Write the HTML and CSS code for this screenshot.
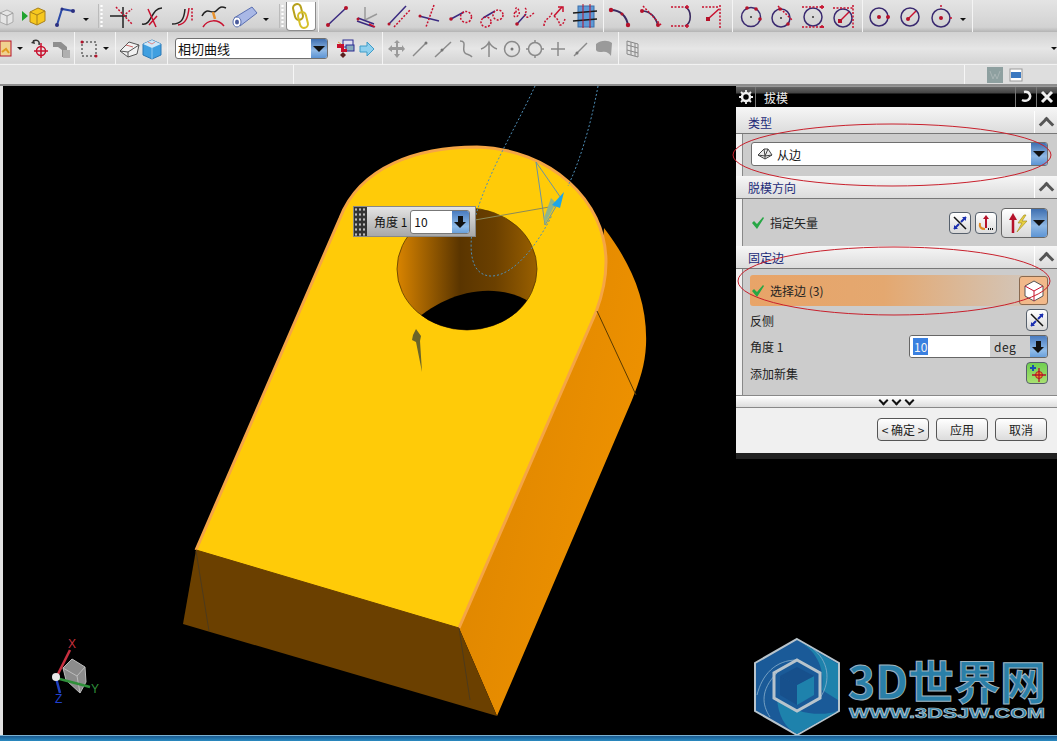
FILE: index.html
```html
<!DOCTYPE html>
<html lang="en">
<head>
  <meta charset="UTF-8">
  <title>拔模</title>
  <link rel="stylesheet" href="styles.css">
</head>
<body>
<div class="app">
  <!-- Top toolbar -->
  <div class="toolbar row-one">
    <div class="tb-group group-file">
      <span class="tool tool-cut"><svg width="16" height="24" viewBox="10 0 16 24"><path d="M10 9l7-3 6 3v9l-6 3-7-3z" fill="#e6e6e6" stroke="#aaa"/><path d="M10 9l7 3 6-3M17 12v9" fill="none" stroke="#999"/></svg></span>
      <span class="tool"><svg width="26" height="24" viewBox="0 0 26 24"><path d="M1 7l6 5-6 5z" fill="#1fa32e"/><path d="M9 8l8-4 7 3v10l-8 4-7-3z" fill="#f7c81e" stroke="#a8801a"/><path d="M9 8l7 3 8-4M16 11v10" fill="none" stroke="#a8801a"/></svg></span>
      <span class="tool"><svg width="24" height="24" viewBox="0 0 24 24"><path d="M4 21L9 5l11 2" class="ln-blue"/><circle cx="4" cy="21" r="2" class="dot-navy"/><circle cx="9" cy="5" r="1.5" class="dot-navy"/><circle cx="20" cy="7" r="2" class="dot-navy"/></svg></span>
      <span class="drop"></span>
    </div>
    <div class="tb-group group-curves">
      <span class="grip"></span>
      <span class="tool"><svg width="24" height="24" viewBox="0 0 24 24"><path d="M1 12h17M14 3v21" class="ln-black"/><path d="M7 3l16 17M14 12L23 5" class="ln-red dash"/></svg></span>
      <span class="tool"><svg width="24" height="24" viewBox="0 0 24 24"><path d="M2 20c10 2 9-16 20-16" class="ln-black"/><path d="M8 5l8 18M17 12L9 21" class="ln-red"/></svg></span>
      <span class="tool"><svg width="24" height="24" viewBox="0 0 24 24"><path d="M1 20c9 0 12-4 13-15" class="ln-black"/><path d="M7 21c8-1 10-8 11-17" class="ln-red"/><path d="M21 4v14" class="ln-red dash"/></svg></span>
      <span class="tool"><svg width="26" height="24" viewBox="0 0 26 24"><path d="M1 12c5-10 10-1 14-5s5-5 10-3" class="ln-black"/><path d="M2 23c5-8 15-8 21-1" class="ln-red"/><path d="M12 8l2 7" class="ln-orange"/></svg></span>
      <span class="tool"><svg width="28" height="24" viewBox="0 0 28 24"><path d="M3 14L21 3l5 6L9 22z" fill="#a9b8e6" stroke="#5a6fb0"/><ellipse cx="6" cy="18" rx="4" ry="5" fill="#fff" stroke="#5a6fb0"/><ellipse cx="6" cy="18" rx="2" ry="2.500" fill="#4a5a9a"/></svg></span>
      <span class="drop"></span>
    </div>
    <div class="tb-group group-chain">
      <span class="grip"></span>
      <span class="chain-btn"><svg width="18" height="28" viewBox="0 0 18 28"><rect x="2" y="2" width="8" height="16" rx="4" transform="rotate(-14 6 10)" fill="none" stroke="#b7a11c" stroke-width="2"/><rect x="7" y="10" width="8" height="16" rx="4" transform="rotate(-14 11 18)" fill="none" stroke="#d6c02a" stroke-width="2"/></svg></span>
    </div>
    <div class="tb-group group-lines">
      <span class="tool"><svg width="24" height="24" viewBox="0 0 24 24"><path d="M3 21L21 4" class="ln-navy"/><circle cx="3" cy="21" r="2" class="dot-red"/><circle cx="21" cy="4" r="2" class="dot-red"/></svg></span>
      <span class="tool"><svg width="24" height="24" viewBox="0 0 24 24"><path d="M9 16V3M9 16l12-6" stroke="#9a9a9a" stroke-width="1.500" fill="none"/><path d="M1 17l17 6M2 14l16 6" class="ln-navy"/><circle cx="2" cy="15" r="1.500" class="dot-red"/><path d="M13 20l6 3" class="ln-red"/></svg></span>
      <span class="tool"><svg width="24" height="24" viewBox="0 0 24 24"><path d="M2 20L19 2" class="ln-navy"/><path d="M7 23L23 6" class="ln-red dash"/><circle cx="2" cy="20" r="1.500" class="dot-red"/></svg></span>
      <span class="tool"><svg width="24" height="24" viewBox="0 0 24 24"><path d="M1 12l20 5" class="ln-navy"/><path d="M16 1L8 23" class="ln-red dash"/><circle cx="2" cy="12" r="1.500" class="dot-red"/></svg></span>
      <span class="tool"><svg width="24" height="24" viewBox="0 0 24 24"><path d="M2 15L15 8" class="ln-navy"/><circle cx="17" cy="13" r="5.500" class="ln-red dash"/><circle cx="2" cy="15" r="1.800" class="dot-red"/></svg></span>
      <span class="tool"><svg width="24" height="24" viewBox="0 0 24 24"><path d="M3 14l12-7" class="ln-navy"/><circle cx="6" cy="18" r="5" class="ln-red dash"/><circle cx="18" cy="11" r="5" class="ln-red dash"/></svg></span>
      <span class="tool"><svg width="24" height="24" viewBox="0 0 24 24"><path d="M6 20l9-10" class="ln-navy"/><path d="M4 8c-4 8 6 5 4-1s-5-3-2 3M14 4c4 3-3 7 1 9 3 1 5-2 8-4" class="ln-red dash"/><circle cx="6" cy="20" r="1.800" class="dot-red"/></svg></span>
      <span class="tool"><svg width="24" height="24" viewBox="0 0 24 24"><path d="M12 12l8-9" class="ln-red"/><path d="M16 3h5v5" class="ln-red"/><path d="M2 22c0-8 7-7 8-14M12 12c4 3 5 6 6 9 3 0 4-3 5-6" class="ln-red dash"/></svg></span>
      <span class="tool"><svg width="26" height="26" viewBox="0 0 26 26"><rect x="6" y="3" width="16" height="21" fill="#5d9ad8" stroke="#3b6fa8"/><path d="M1 10l24-2M1 18l24-2" stroke="#1a1a1a" stroke-width="1.500"/><path d="M11 1v24M18 1v24" stroke="#b5122a"/></svg></span>
    </div>
    <div class="tb-group group-arcs">
      <span class="tool"><svg width="24" height="24" viewBox="0 0 24 24"><path d="M3 6c9 0 16 6 17 16" stroke="#3a2a60" stroke-width="2" fill="none"/><circle cx="3" cy="6" r="2.200" class="dot-red"/><circle cx="20" cy="21" r="2.200" class="dot-red"/><circle cx="14" cy="10" r="1.500" class="dot-red"/></svg></span>
      <span class="tool"><svg width="24" height="24" viewBox="0 0 24 24"><path d="M3 7c8 0 14 6 16 15" stroke="#3a2a60" stroke-width="1.600" fill="none"/><path d="M4 2l18 19" class="ln-red dash"/><circle cx="3" cy="7" r="2" class="dot-red"/><circle cx="19" cy="21" r="2" class="dot-red"/></svg></span>
      <span class="tool"><svg width="24" height="24" viewBox="0 0 24 24"><path d="M1 3h14M1 22h14" class="ln-red dash"/><path d="M15 3c7 3 7 16 0 19" stroke="#3a2a60" stroke-width="1.600" fill="none"/><path d="M17 1v4M15 3h4M17 20v4M15 22h4" class="ln-red"/></svg></span>
      <span class="tool"><svg width="24" height="24" viewBox="0 0 24 24"><path d="M1 3h16M19 1v23" class="ln-red dash"/><path d="M7 15L18 5" class="ln-red"/><rect x="5" y="13" width="4" height="4" class="dot-red"/></svg></span>
    </div>
    <div class="tb-group group-circles">
      <span class="tool"><svg width="24" height="24" viewBox="0 0 24 24"><circle cx="12" cy="13" r="9.500" class="ln-circle"/><circle cx="12" cy="13" r="1" fill="#333"/><circle cx="8" cy="4" r="1.800" class="dot-red"/><circle cx="17" cy="5" r="1.800" class="dot-red"/><circle cx="21" cy="15" r="1.800" class="dot-red"/></svg></span>
      <span class="tool"><svg width="24" height="24" viewBox="0 0 24 24"><circle cx="11" cy="14" r="9" class="ln-circle"/><circle cx="11" cy="14" r="1" fill="#333"/><path d="M8 2l14 14" class="ln-red dash"/><circle cx="10" cy="5" r="1.800" class="dot-red"/><circle cx="18" cy="20" r="1.800" class="dot-red"/></svg></span>
      <span class="tool"><svg width="24" height="24" viewBox="0 0 24 24"><circle cx="12" cy="13" r="9" class="ln-circle"/><circle cx="12" cy="13" r="1" fill="#333"/><path d="M1 3h22M1 23h22" class="ln-red dash"/><path d="M21 1v4M19 3h4M21 21v4M19 23h4" class="ln-red"/></svg></span>
      <span class="tool"><svg width="24" height="24" viewBox="0 0 24 24"><circle cx="11" cy="14" r="9" class="ln-circle"/><path d="M8 17l9-9" class="ln-red"/><rect x="6" y="15" width="4" height="4" class="dot-red"/><path d="M1 4h20M21 1v23" class="ln-red dash"/></svg></span>
    </div>
    <div class="tb-group group-circles2">
      <span class="tool"><svg width="24" height="24" viewBox="0 0 24 24"><circle cx="11" cy="13" r="9" class="ln-circle"/><circle cx="11" cy="13" r="2" class="dot-red"/><circle cx="20" cy="13" r="2" class="dot-red"/></svg></span>
      <span class="tool"><svg width="24" height="24" viewBox="0 0 24 24"><circle cx="11" cy="13" r="9" class="ln-circle"/><path d="M9 15l8-8" class="ln-red"/><circle cx="9" cy="15" r="2" class="dot-red"/></svg></span>
      <span class="tool"><svg width="24" height="24" viewBox="0 0 24 24"><circle cx="11" cy="14" r="9" class="ln-circle"/><circle cx="11" cy="14" r="2" class="dot-red"/><path d="M11 1v4M20 14h3" class="ln-red dash"/></svg></span>
      <span class="drop"></span>
    </div>
    <div class="tb-rest"></div>
  </div>

  <div class="toolbar row-two">
    <div class="tb-group group-sel">
      <span class="tool2 tool-cut"><svg width="12" height="22" viewBox="12 0 12 22"><rect x="12" y="3" width="11" height="15" fill="#f0d090" stroke="#b5122a"/><path d="M14 14l4-3 3 4" stroke="#e09a20" stroke-width="2" fill="none"/></svg></span>
      <span class="drop"></span>
      <span class="tool2 tool-undo"><svg width="22" height="22" viewBox="0 0 22 22"><path d="M4 3c4-2 7 0 6 4" stroke="#333" fill="none" stroke-width="1.500"/><path d="M2 5l3-3 1 4z" fill="#333"/><circle cx="12" cy="13" r="4.500" class="ln-red"/><path d="M12 5v15M5 13h14" class="ln-red"/></svg></span>
      <span class="tool2"><svg width="22" height="22" viewBox="0 0 22 22"><path d="M2 4h8l6 5v10h-5v-7L7 9H2z" fill="#8f8f8f"/><path d="M12 12h7v8h-7z" fill="#b0b0b0"/></svg></span>
    </div>
    <div class="tb-group group-marquee">
      <span class="tool2"><svg width="18" height="18" viewBox="0 0 18 18"><rect x="2" y="2" width="14" height="14" fill="none" stroke="#222" stroke-dasharray="2 2"/><circle cx="2" cy="2" r="1.500" class="dot-red"/><circle cx="16" cy="16" r="1.500" class="dot-red"/></svg></span>
      <span class="drop"></span>
    </div>
    <div class="tb-group group-view">
      <span class="tool2"><svg width="22" height="22" viewBox="0 0 22 22"><path d="M1 13l9-9 10 3-2 9-9 3z" fill="#f2f2f2" stroke="#555"/><path d="M1 13l8 1 11-7M9 14v5" fill="none" stroke="#555"/><path d="M7 7l7 2" stroke="#c66" /></svg></span>
      <span class="tool2"><svg width="22" height="22" viewBox="0 0 22 22"><path d="M2 6l9-4 9 4v11l-9 4-9-4z" fill="#3f9fe0" stroke="#2a78b5"/><path d="M2 6l9 4 9-4-9-4z" fill="#cfe8f8"/><path d="M7 4l4 2 3-2" stroke="#d88" fill="none"/><path d="M11 10v11" stroke="#8cc8f0"/></svg></span>
    </div>
    <div class="tb-group group-combo">
      <div class="combo curve-combo">
        <span class="combo-text">相切曲线</span>
        <span class="combo-btn"><span class="tri"></span></span>
      </div>
      <span class="tool2"><svg width="20" height="22" viewBox="0 0 20 22"><rect x="8" y="2" width="10" height="7" fill="#dde" stroke="#2a2a90"/><rect x="11" y="7" width="8" height="6" fill="#8ab" stroke="#2a2a90"/><path d="M2 6h7v5h3v3H6v-4H2z" fill="#c8102e"/><path d="M3 4l3 2" stroke="#e0a040"/><path d="M8 14l3 3-3 3-3-3z" fill="#5a2020"/></svg></span>
      <span class="tool2"><svg width="18" height="18" viewBox="0 0 18 18"><path d="M2 6h7V2l7 7-7 7v-4H2z" fill="#8fd0ee" stroke="#3e9cc8"/></svg></span>
    </div>
    <div class="tb-group group-gray">
      <span class="tool3"><svg width="20" height="20" viewBox="0 0 20 20"><path d="M10 1l3 3h-2v4h4V6l3 4-3 3v-2h-4v4h2l-3 4-3-4h2v-4H5v2l-4-3 4-4v2h4V4H7z" fill="#9a9a9a"/></svg></span>
      <span class="tool3"><svg width="20" height="20" viewBox="0 0 20 20"><path d="M3 17L16 4" class="ln-gray"/><circle cx="16" cy="4" r="1.500" fill="#777"/></svg></span>
      <span class="tool3"><svg width="20" height="20" viewBox="0 0 20 20"><path d="M2 18L18 3" class="ln-gray"/><circle cx="9" cy="11" r="1.500" fill="#777"/></svg></span>
      <span class="tool3"><svg width="20" height="20" viewBox="0 0 20 20"><path d="M4 2c8 0 1 8 5 12 2 2 5 1 7 4" class="ln-gray"/></svg></span>
      <span class="tool3"><svg width="20" height="20" viewBox="0 0 20 20"><path d="M2 10c3-1 6-3 8-7 2 4 5 6 8 7M10 3v15" class="ln-gray"/></svg></span>
      <span class="tool3"><svg width="20" height="20" viewBox="0 0 20 20"><circle cx="10" cy="10" r="7.500" class="ln-gray"/><circle cx="10" cy="10" r="1.500" fill="#777"/></svg></span>
      <span class="tool3"><svg width="20" height="20" viewBox="0 0 20 20"><circle cx="10" cy="10" r="6.500" class="ln-gray"/><path d="M10 1v3M10 16v3M1 10h3M16 10h3" class="ln-gray"/></svg></span>
      <span class="tool3"><svg width="20" height="20" viewBox="0 0 20 20"><path d="M10 3v14M3 10h14" class="ln-gray"/></svg></span>
      <span class="tool3"><svg width="20" height="20" viewBox="0 0 20 20"><path d="M3 17L16 4" class="ln-gray"/><circle cx="6" cy="14" r="1.500" fill="#777"/></svg></span>
      <span class="tool3"><svg width="20" height="20" viewBox="0 0 20 20"><path d="M2 5c5-4 12-4 16-1l-1 13c-2-3-5-5-9-4-3 0-5 0-6-2z" fill="#9a9a9a"/></svg></span>
    </div>
    <div class="tb-group group-grid">
      <span class="tool3"><svg width="16" height="20" viewBox="0 0 16 20"><path d="M2 2l11 3v13L2 15zM2 6l11 3M2 11l11 3M6 3v13M10 4v13" fill="none" stroke="#888"/></svg></span>
    </div>
    <div class="tb-rest"><span class="drop"></span></div>
  </div>

  <div class="toolbar row-three">
    <div class="status-a"></div>
    <div class="status-b"></div>
    <div class="status-c">
      <svg width="16" height="16" viewBox="0 0 16 16"><rect width="16" height="16" fill="#8ea0a0"/><path d="M3 4l3 8 2-5 2 5 3-8" stroke="#a8b4b4" fill="none"/></svg>
      <svg width="16" height="16" viewBox="0 0 16 16"><rect x="2" y="2" width="12" height="12" fill="#fff" stroke="#999"/><rect x="3" y="5" width="10" height="6" fill="#3a78c0"/></svg>
    </div>
  </div>

  <!-- Graphics window -->
  <div class="viewport">
    <svg class="scene" width="1054" height="649" viewBox="3 86 1054 649">
      <defs>
        <linearGradient id="holeFill" x1="0" x2="1" y1="0" y2="0">
          <stop offset="0" stop-color="#d98400"/>
          <stop offset="0.45" stop-color="#5a3500"/>
          <stop offset="0.7" stop-color="#6b4000"/>
          <stop offset="1" stop-color="#9a6000"/>
        </linearGradient>
        <linearGradient id="sideFill" x1="0" x2="1" y1="0" y2="0.6">
          <stop offset="0" stop-color="#d98200"/>
          <stop offset="1" stop-color="#f09300"/>
        </linearGradient>
        <clipPath id="holeClip"><ellipse cx="467" cy="269" rx="70" ry="61"/></clipPath>
      </defs>
      <path d="M604 228C630 262 648 300 646 345 645 365 640 380 632 400L497 716 459 628 600 300z" fill="url(#sideFill)"/>
      <path d="M196 550L459 628 497 716 183 624z" fill="#6b4000"/>
      <path d="M196 551l13 80M459 628l11 72" stroke="#4d3a1c" stroke-width="1" fill="none"/>
      <path d="M196 550L340 218C360 166 418 147 477 147 550 149 606 200 606 262 606 280 602 296 596 312L459 628" fill="#ffcb08" stroke="#f5a545" stroke-width="3"/>
      <path d="M196 550L459 628" stroke="#6b4000" stroke-width="1"/>
      <path d="M597 311L636 395" stroke="#5a3a00" stroke-width="1"/>
      <ellipse cx="467" cy="269" rx="70" ry="61" fill="url(#holeFill)" stroke="#5a3a00" stroke-width="0.800"/>
      <path d="M410 325C440 295 490 278 530 302L540 340 420 350z" fill="#000" clip-path="url(#holeClip)"/>
      <path d="M416 329L421 336 420 341 422 372 416 342 412 340 413 335z" fill="#6b6428"/>
      <path d="M535 86C515 130 480 185 472 232 468 265 478 275 490 276 515 277 540 240 552 215M598 86C590 130 578 165 568 186" fill="none" stroke="#4f8fb8" stroke-width="1" stroke-dasharray="2 2"/>
      <path d="M536 162L561 198 545 225z" fill="none" stroke="#6a93a5" stroke-width="1"/>
      <path d="M475 220L555 206" fill="none" stroke="#8a8a5a" stroke-width="1"/>
      <path d="M545 224L556 203 551 198 544 218z" fill="#8fb58a"/>
      <path d="M552 205L564 192 560 208z" fill="#1ea6e8"/>
      <g class="triad">
        <path d="M63 668L72 659 85 667 86 682 80 693 66 680z" fill="#8c8c8c" stroke="#bdbdbd"/>
        <path d="M63 668L77 676 85 667M77 676L80 693" fill="none" stroke="#bdbdbd"/>
        <path d="M56 678L70 650" stroke="#c83040" stroke-width="2.500"/>
        <path d="M56 678L90 687" stroke="#2f8f3a" stroke-width="2.500"/>
        <path d="M56 678L60 693" stroke="#2040c0" stroke-width="2.500"/>
        <circle cx="56" cy="677" r="4" fill="#e8e8e8"/>
        <text x="68" y="648" class="axis axis-x">X</text>
        <text x="91" y="693" class="axis axis-y">Y</text>
        <text x="55" y="703" class="axis axis-z">Z</text>
      </g>
      <g class="logo">
        <path d="M797 639L839 663 839 711 797 735 755 711 755 663z" fill="#1a5a98" stroke="#b8c4cc" stroke-width="2"/>
        <path d="M797 640C815 650 825 665 822 690L838 700 838 664z" fill="#1e82ac"/>
        <path d="M777 698C778 715 785 728 797 734L838 711C825 716 795 716 777 698z" fill="#1e82ac"/>
        <path d="M757 695C762 675 775 660 797 660M777 673C760 690 762 705 770 717M820 698C832 680 828 660 812 648" fill="none" stroke="#8ab0cc" stroke-width="0.800"/>
        <path d="M797 660L820 673 820 698 797 711 774 698 774 673z" fill="none" stroke="#b8c4cc" stroke-width="3"/>
        <path d="M797 685L814 676 814 695 797 705z" fill="#1e82ac"/>
        <path d="M797 685L780 676 780 695 797 705z" fill="#17508c"/>
        <path d="M797 667L814 676 797 685 780 676z" fill="#17508c"/>
        <text x="848" y="699" textLength="198" lengthAdjust="spacingAndGlyphs" class="logo-title">3D世界网</text>
        <text x="849" y="718" textLength="196" lengthAdjust="spacingAndGlyphs" class="logo-url">WWW.3DSJW.COM</text>
      </g>
    </svg>

    <!-- on-screen angle input -->
    <div class="angle-tag">
      <span class="tag-grip"></span>
      <span class="tag-label">角度 1</span>
      <div class="tag-input"><span>10</span><span class="arrow-btn"><span class="arrow-down"></span></span></div>
    </div>

    <!-- Draft dialog -->
    <div class="dialog">
      <div class="dlg-title">
        <span class="dlg-gear"><svg width="14" height="14" viewBox="0 0 14 14"><circle cx="7" cy="7" r="4" fill="none" stroke="#eee" stroke-width="2.500"/><path d="M7 0v3M7 11v3M0 7h3M11 7h3M2 2l2 2M10 10l2 2M12 2l-2 2M2 12l2-2" stroke="#eee" stroke-width="1.800"/></svg></span>
        <span class="dlg-name">拔模</span>
        <span class="dlg-btn"><svg width="14" height="14" viewBox="0 0 14 14"><path d="M5 2c6-1 8 5 4 8-2 1-4 1-6 0" fill="none" stroke="#eee" stroke-width="2.500"/></svg></span>
        <span class="dlg-btn"><svg width="14" height="14" viewBox="0 0 14 14"><path d="M2 2l10 10M12 2L2 12" stroke="#eee" stroke-width="3"/></svg></span>
      </div>

      <div class="sec-head sec-first"><span>类型</span><span class="chev"></span></div>
      <div class="sec-body body-type">
        <div class="combo type-combo">
          <svg width="16" height="14" viewBox="0 0 16 14"><path d="M1 8l6-6 4 0 4 6-7 4z" fill="#eee" stroke="#444"/><path d="M1 8l7 1 7-1M8 9v3M7 2l1 7 3-7" fill="none" stroke="#444"/></svg>
          <span class="combo-text">从边</span>
          <span class="combo-btn"><span class="tri"></span></span>
        </div>
      </div>

      <div class="sec-head"><span>脱模方向</span><span class="chev"></span></div>
      <div class="sec-body body-dir">
        <svg class="check" width="14" height="14" viewBox="0 0 14 14"><path d="M1 7l2-2 3 3 6-7 1 1-7 11z" fill="#27a745"/></svg>
        <span class="row-label">指定矢量</span>
        <span class="icon-btn btn-cross"><svg width="16" height="16" viewBox="0 0 16 16"><path d="M2 2l12 12" stroke="#111" stroke-width="1.500"/><path d="M14 2L9 7M7 9l-5 5" stroke="#1a2fb0" stroke-width="2"/><path d="M10 2h4v4zM2 10v4h4z" fill="#1a2fb0"/></svg></span>
        <span class="icon-btn btn-vector"><svg width="18" height="18" viewBox="0 0 18 18"><path d="M9 14V4" stroke="#b5122a" stroke-width="2"/><path d="M9 1l3 4H6z" fill="#b5122a"/><path d="M3 9c-1 4 1 6 5 6" stroke="#e08a20" stroke-width="2" fill="none"/><path d="M11 15h1M13 15h1M15 15h1" stroke="#111" stroke-width="2"/></svg></span>
        <span class="split-btn">
          <span class="split-main"><svg width="26" height="24" viewBox="0 0 26 24"><path d="M9 22V8" stroke="#b5122a" stroke-width="2.500"/><path d="M9 2l4 7H5z" fill="#b5122a"/><path d="M20 4l-6 8h4l-5 9 10-11h-5l4-6z" fill="#e8d040" stroke="#a89020" stroke-width="0.700"/></svg></span>
          <span class="combo-btn"><span class="tri"></span></span>
        </span>
      </div>

      <div class="sec-head"><span>固定边</span><span class="chev"></span></div>
      <div class="sec-body body-edge">
        <div class="select-row">
          <svg class="check" width="14" height="14" viewBox="0 0 14 14"><path d="M1 7l2-2 3 3 6-7 1 1-7 11z" fill="#27a745"/></svg>
          <span class="row-label">选择边 (3)</span>
          <span class="cube-btn"><svg width="24" height="24" viewBox="0 0 24 24"><path d="M3 7l9-5 9 5v10l-9 5-9-5z" fill="#fff" stroke="#555"/><path d="M3 7l9 5 9-5M12 12v10" fill="none" stroke="#c8102e"/></svg></span>
        </div>
        <div class="opt-row"><span class="row-label">反侧</span>
          <span class="icon-btn btn-cross"><svg width="16" height="16" viewBox="0 0 16 16"><path d="M2 2l12 12" stroke="#111" stroke-width="1.500"/><path d="M14 2L9 7M7 9l-5 5" stroke="#1a2fb0" stroke-width="2"/><path d="M10 2h4v4zM2 10v4h4z" fill="#1a2fb0"/></svg></span>
        </div>
        <div class="opt-row"><span class="row-label">角度 1</span>
          <div class="num-input">
            <span class="num-value"><span class="selected-text">10</span></span>
            <span class="num-unit">deg</span>
            <span class="arrow-btn"><span class="arrow-down"></span></span>
          </div>
        </div>
        <div class="opt-row"><span class="row-label">添加新集</span>
          <span class="icon-btn btn-add"><svg width="18" height="18" viewBox="0 0 18 18"><circle cx="11" cy="11" r="3.500" fill="#e8a020" stroke="#b5122a"/><path d="M11 4v14M4 11h14" stroke="#b5122a" stroke-width="1.300"/><path d="M5 1v6M2 4h6" stroke="#1a4fb0" stroke-width="2"/></svg></span>
        </div>
      </div>

      <div class="more-bar"><span class="vee"></span><span class="vee"></span><span class="vee"></span></div>
      <div class="dlg-foot">
        <button class="dlg-action" type="button">&lt; 确定 &gt;</button>
        <button class="dlg-action" type="button">应用</button>
        <button class="dlg-action" type="button">取消</button>
      </div>
    </div>

    <!-- red hand-drawn markup on top of the dialog -->
    <svg class="markup" width="1057" height="649" viewBox="0 86 1057 649">
      <ellipse cx="892" cy="155" rx="159" ry="31"/>
      <ellipse cx="894" cy="281" rx="156" ry="34"/>
    </svg>
  </div>

  <div class="taskbar"></div>
</div>
</body>
</html>
```

FILE: styles.css
```css
* {
  box-sizing: border-box;
}
body {
  margin: 0;
  background: #000;
  font-family: "Noto Sans CJK SC", "Liberation Sans", sans-serif;
  font-size: 12px;
  color: #222;
}
.app {
  width: 1057px;
  height: 741px;
  display: flex;
  flex-direction: column;
  overflow: hidden;
}

/* Toolbars */
.toolbar {
  display: flex;
  align-items: stretch;
  flex: none;
}
.row-one {
  height: 32px;
  background: linear-gradient(#e4e4e4, #d2d2d2 85%, #b4b4b4);
}
.row-two {
  height: 33px;
  background: linear-gradient(#d2d2d2, #e6e6e6 50%, #d4d4d4 95%, #fff);
}
.row-three {
  height: 21px;
  background: #dedede;
  border-bottom: 2px solid #8d8d8d;
}
.tb-group {
  display: flex;
  align-items: center;
  border-right: 1px solid #f4f4f4;
  height: 100%;
}
.tb-rest {
  flex: 1;
  display: flex;
  align-items: center;
  justify-content: flex-end;
}
.tool {
  width: 31px;
  height: 29px;
  display: flex;
  align-items: center;
  justify-content: center;
  flex: none;
}
.tool2 {
  width: 22px;
  height: 30px;
  display: flex;
  align-items: center;
  justify-content: center;
  flex: none;
}
.tool3 {
  width: 23px;
  height: 30px;
  display: flex;
  align-items: center;
  justify-content: center;
  flex: none;
}
.tool-cut {
  justify-content: flex-start;
}
.drop {
  width: 0;
  height: 0;
  margin: 6px 3px 0;
  border-left: 3px solid transparent;
  border-right: 3px solid transparent;
  border-top: 3px solid #111;
  flex: none;
}
.grip {
  width: 5px;
  height: 24px;
  margin: 0 2px;
  flex: none;
  background: radial-gradient(circle, #fff 1px, transparent 1.300px) 0 0 / 5px 4px;
  border-left: 1px solid #bbb;
}

/* row one groups, widths follow the reference spacing */
.group-file {
  width: 96px;
  border-right: 0;
}
.group-file .tool-cut {
  width: 18px;
}
.group-curves {
  width: 177px;
  border-right: 0;
}
.group-chain {
  width: 46px;
  padding-left: 4px;
  border-right: 1px solid #f4f4f4;
}
.chain-btn {
  width: 30px;
  height: 29px;
  display: flex;
  align-items: center;
  justify-content: center;
  background: #fff;
  border: 1px solid #8c8c8c;
  border-top: 0;
  border-radius: 0 0 4px 4px;
}
.group-lines {
  width: 285px;
  padding-left: 2px;
}
.group-arcs {
  width: 129px;
}
.group-circles {
  width: 130px;
  padding-left: 2px;
}
.group-circles2 {
  width: 110px;
  padding-left: 1px;
}

/* row two groups */
.group-sel {
  width: 75px;
}
.group-sel .tool-cut {
  width: 12px;
}
.group-sel .drop {
  margin: 0 3px 0 5px;
}
.tool-undo {
  margin-left: 3px;
}
.group-marquee {
  width: 41px;
  padding-left: 3px;
}
.group-marquee .drop {
  margin: 0 3px;
}
.group-view {
  width: 52px;
  padding-left: 3px;
}
.group-combo {
  width: 215px;
  padding-left: 7px;
}
.group-combo .tool2:first-of-type {
  margin-left: 6px;
}
.group-gray {
  width: 236px;
  padding-left: 2px;
}
.group-grid {
  border-right: 0;
  padding-left: 2px;
}
.row-two .tb-rest .drop {
  margin: 0;
}
.curve-combo {
  width: 153px;
  height: 21px;
  flex: none;
  font-size: 12px;
}

/* status row */
.status-a {
  width: 294px;
  border-right: 1px solid #f6f6f6;
}
.status-b {
  width: 671px;
  border-right: 1px solid #f6f6f6;
}
.status-c {
  display: flex;
  gap: 5px;
  align-items: center;
  padding-left: 22px;
}

/* Combos and small controls */
.combo {
  display: flex;
  align-items: center;
  gap: 4px;
  background: #fff;
  border: 1px solid #6f6f6f;
  border-radius: 3px;
  padding-left: 2px;
  font-size: 13px;
  color: #111;
}
.combo-text {
  flex: 1;
  white-space: nowrap;
}
.combo-btn {
  width: 16px;
  height: 100%;
  display: flex;
  align-items: center;
  justify-content: center;
  background: linear-gradient(#3f6fb0, #8fb8e4 60%, #5c94d4);
  border-radius: 0 2px 2px 0;
  flex: none;
}
.tri {
  width: 0;
  height: 0;
  border-left: 6px solid transparent;
  border-right: 6px solid transparent;
  border-top: 6px solid #111;
}
.arrow-btn {
  width: 17px;
  height: 100%;
  display: flex;
  align-items: center;
  justify-content: center;
  background: linear-gradient(#4a7cc0, #8fbbe8 70%, #6aa0da);
  flex: none;
}
.arrow-down {
  position: relative;
  width: 5px;
  height: 6px;
  margin-bottom: 5px;
  background: #111;
}
.arrow-down::after {
  content: "";
  position: absolute;
  left: -4px;
  top: 6px;
  border-left: 6.500px solid transparent;
  border-right: 6.500px solid transparent;
  border-top: 6px solid #111;
}

/* Graphics area */
.viewport {
  position: relative;
  flex: 1;
  background: #000;
  border-left: 3px solid #e2e2e2;
}
.scene {
  position: absolute;
  left: 0;
  top: 0;
}
.axis {
  font-family: "Liberation Sans", sans-serif;
  font-size: 12px;
}
.axis-x {
  fill: #c8303c;
}
.axis-y {
  fill: #2f8f3a;
}
.axis-z {
  fill: #2040d0;
}
.logo-title {
  font-family: "Noto Sans CJK SC", sans-serif;
  font-weight: 700;
  font-size: 46px;
  fill: #2a7fa8;
  stroke: #9fb4c0;
  stroke-width: 1;
}
.logo-url {
  font-family: "Liberation Sans", sans-serif;
  font-weight: 700;
  font-size: 15px;
  fill: #2a7fa8;
  stroke: #b8c4cc;
  stroke-width: 0.700;
}
.markup {
  position: absolute;
  left: -3px;
  top: 0;
  pointer-events: none;
}
.markup ellipse {
  fill: none;
  stroke: #c8202c;
  stroke-width: 1;
}

/* Angle tag in the model */
.angle-tag {
  position: absolute;
  left: 350px;
  top: 120px;
  width: 123px;
  height: 31px;
  display: flex;
  align-items: center;
  background: linear-gradient(#e4e4e4, #a8a8a8);
  border: 1px solid #888;
}
.tag-grip {
  width: 13px;
  height: 100%;
  background: radial-gradient(circle, #bbb 1px, transparent 1.300px) 0 0 / 4px 5px, #333;
  flex: none;
}
.tag-label {
  margin: 0 3px 0 7px;
  white-space: nowrap;
  color: #111;
}
.tag-input {
  width: 60px;
  height: 24px;
  display: flex;
  align-items: center;
  justify-content: space-between;
  background: #fff;
  border: 1px solid #777;
  border-radius: 3px;
  padding-left: 3px;
  color: #111;
  overflow: hidden;
}

/* Draft dialog */
.dialog {
  position: absolute;
  left: 733px;
  top: 0;
  width: 321px;
  height: 373px;
  background: #f0f0f0;
  border-top: 1px solid #999;
  border-bottom: 6px solid #222;
  display: flex;
  flex-direction: column;
}
.dlg-title {
  height: 20px;
  flex: none;
  display: flex;
  align-items: center;
  background: linear-gradient(#666, #444 30%, #000 35%);
  color: #eee;
  font-size: 12px;
}
.dlg-gear {
  width: 20px;
  height: 100%;
  display: flex;
  align-items: center;
  justify-content: center;
  border-right: 1px solid #777;
}
.dlg-name {
  flex: 1;
  padding-left: 8px;
}
.dlg-btn {
  width: 21px;
  height: 100%;
  display: flex;
  align-items: center;
  justify-content: center;
  border-left: 1px solid #777;
}
.sec-head {
  flex: none;
  height: 23px;
  display: flex;
  align-items: center;
  justify-content: space-between;
  padding-left: 12px;
  background: linear-gradient(#f6f6f6, #dcdcdc);
  border-bottom: 1px solid #777;
  color: #1c2a78;
}
.sec-first {
  height: 27px;
  padding-top: 4px;
}
.chev {
  width: 23px;
  height: 100%;
  position: relative;
  border-left: 1px solid #fff;
}
.chev::before {
  content: "";
  position: absolute;
  left: 6px;
  top: 8px;
  width: 8px;
  height: 8px;
  border-left: 3px solid #555;
  border-top: 3px solid #555;
  transform: rotate(45deg);
}
.sec-body {
  flex: none;
  background: #cccccc;
  border-left: 1px solid #888;
  margin-left: 6px;
}
.body-type {
  height: 42px;
  padding: 8px 9px 0 8px;
}
.type-combo {
  height: 24px;
  padding-left: 5px;
  font-size: 12px;
}
.body-dir {
  height: 47px;
  display: flex;
  align-items: center;
  padding: 0 9px 0 8px;
}
.body-dir .row-label {
  flex: 1;
  margin-left: 5px;
}
.icon-btn {
  width: 22px;
  height: 22px;
  display: flex;
  align-items: center;
  justify-content: center;
  background: linear-gradient(#fff, #d8d8d8);
  border: 1px solid #56606c;
  border-radius: 4px;
  flex: none;
}
.btn-vector {
  margin-left: 4px;
  background: linear-gradient(#fff, #ddd);
}
.split-btn {
  width: 47px;
  height: 30px;
  margin-left: 4px;
  display: flex;
  background: linear-gradient(#fff, #d8d8d8);
  border: 1px solid #666;
  border-radius: 4px;
  overflow: hidden;
  flex: none;
}
.split-main {
  flex: 1;
  display: flex;
  align-items: center;
  justify-content: center;
}
.body-edge {
  height: 126px;
  padding: 6px 9px 0 7px;
}
.select-row {
  height: 31px;
  display: flex;
  align-items: center;
  padding-left: 1px;
  background: linear-gradient(90deg, #e8a468, #e4a870 45%, #d0cac4);
  border-radius: 3px;
  margin-bottom: 1px;
}
.select-row .row-label {
  flex: 1;
  margin-left: 5px;
}
.cube-btn {
  width: 29px;
  height: 29px;
  display: flex;
  align-items: center;
  justify-content: center;
  background: #f2b98a;
  border: 1px solid #8a6a50;
  border-radius: 3px;
}
.opt-row {
  height: 26.500px;
  display: flex;
  align-items: center;
  justify-content: space-between;
}
.row-label {
  white-space: nowrap;
  color: #222;
}
.btn-add {
  background: linear-gradient(#6fce50, #a8e070);
}
.num-input {
  width: 139px;
  height: 23px;
  display: flex;
  align-items: center;
  background: #cfcfcf;
  border: 1px solid #666;
  border-radius: 3px;
  overflow: hidden;
}
.num-value {
  width: 80px;
  height: 100%;
  display: flex;
  align-items: center;
  padding-left: 3px;
  background: #fff;
}
.selected-text {
  background: #3a80e0;
  color: #f4f4f4;
  padding: 0 1px;
  line-height: 17px;
}
.num-unit {
  flex: 1;
  padding-left: 4px;
  letter-spacing: 0.500px;
}
.more-bar {
  height: 13px;
  flex: none;
  display: flex;
  align-items: center;
  justify-content: center;
  gap: 6px;
  background: linear-gradient(#fff, #ddd);
  border-top: 1px solid #888;
  border-bottom: 1px solid #888;
}
.vee {
  width: 7px;
  height: 7px;
  margin-top: -3px;
  border-right: 2px solid #111;
  border-bottom: 2px solid #111;
  transform: rotate(45deg);
}
.dlg-foot {
  flex: 1;
  display: flex;
  justify-content: flex-end;
  align-items: flex-start;
  gap: 7px;
  padding: 10px 10px 0 0;
  background: #f0f0f0;
}
.dlg-action {
  width: 52px;
  height: 23px;
  padding: 0;
  font-family: inherit;
  font-size: 12px;
  color: #222;
  white-space: nowrap;
  background: linear-gradient(#fff, #dcdcdc);
  border: 1px solid #555;
  border-radius: 4px;
}
.taskbar {
  height: 6px;
  flex: none;
  background: linear-gradient(#1a5a90, #2a8ac0);
  border-top: 1px solid #7ab0d0;
}

/* SVG line styles shared by the toolbar icons */
.ln-black,
.ln-red,
.ln-navy,
.ln-blue,
.ln-orange,
.ln-gray,
.ln-circle {
  fill: none;
  stroke-width: 1.500;
}
.ln-black {
  stroke: #222;
}
.ln-red {
  stroke: #c8102e;
}
.ln-navy {
  stroke: #3a2a80;
}
.ln-blue {
  stroke: #2b4aa8;
  stroke-width: 2;
}
.ln-orange {
  stroke: #e8902a;
  stroke-width: 2.500;
}
.ln-gray {
  stroke: #8a8a8a;
}
.ln-circle {
  stroke: #3a2a70;
}
.dash {
  stroke-dasharray: 2 1.500;
}
.dot-red {
  fill: #b5122a;
}
.dot-navy {
  fill: #2b2f80;
}
```
